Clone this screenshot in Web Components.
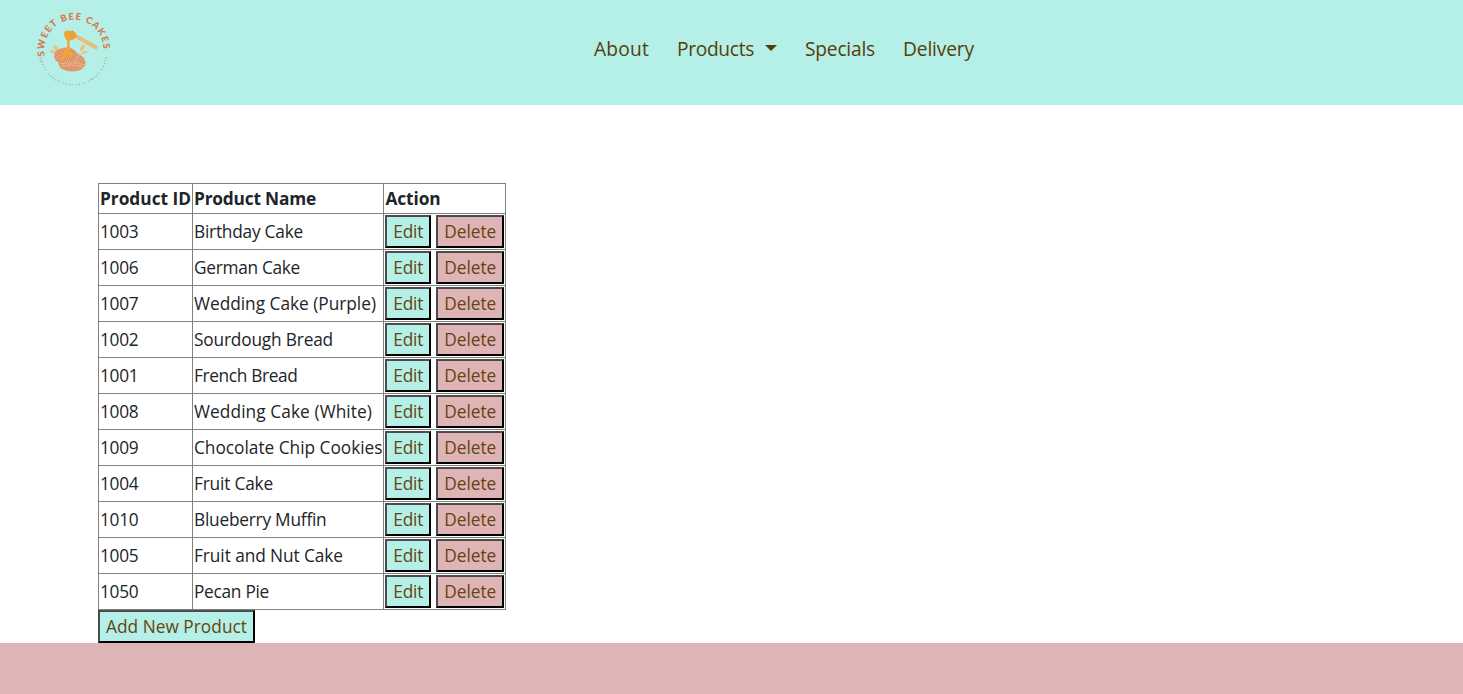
<!DOCTYPE html>
<html lang="en">
<head>
<meta charset="utf-8">
<title>Sweet Bee Cakes</title>
<style>
html, body { margin: 0; height: 100%; background: #fff; }
body { font: 17.3px/27px "Open Sans", "Noto Sans", sans-serif; color: #212529; overflow: hidden; }
</style>
</head>
<body>
<bakery-page></bakery-page>
<script>
// Inline text set to a given advance width through its letter spacing.
class FitText extends HTMLElement {
  connectedCallback() {
    const root = this.attachShadow({ mode: 'open' });
    root.innerHTML = '<style>:host{display:inline-block;white-space:nowrap}span{display:inline-block}</style><span><slot></slot></span>';
    const span = root.querySelector('span');
    const target = +this.getAttribute('w');
    const natural = span.getBoundingClientRect().width;
    span.style.letterSpacing = (target - natural) / this.textContent.length + 'px';
    this.style.width = target + 'px';
  }
}

class BeeLogo extends HTMLElement {
  connectedCallback() {
    this.attachShadow({ mode: 'open' }).innerHTML = `
<style>:host{display:block;width:92px;height:92px}svg{display:block}text{font-family:Lato,sans-serif}</style>
<svg width="92" height="92" viewBox="0 0 92 92">
  <defs>
    <path id="top" d="M17.2 53A29.6 30 0 1 1 74.6 53"/>
    <path id="low" d="M11.2 47.500A34.3 34.3 0 0 0 79.8 47.500"/>
    <pattern id="weave" width="2.2" height="2.2" patternUnits="userSpaceOnUse" patternTransform="rotate(25)">
      <rect width="2.2" height="2.2" fill="#d98359"/><path d="M0 .4H2.2M.4 0V2.2" stroke="#e6ad88" stroke-width=".6"/>
    </pattern>
  </defs>
  <text font-size="9.4" font-weight="900" fill="#d9774b"><textPath href="#top" startOffset="1" textLength="99">SWEET BEE CAKES</textPath></text>
  <text font-size="2.6" font-weight="700" fill="#a59a7e"><textPath href="#low" startOffset="6" textLength="96">SWEET CAKES THAT IS A SWEET CAKES</textPath></text>
  <g fill="#e9c57c">
    <path d="M30 47.500Q24.500 46 26 40.500Q31 42.500 30 47.500Z"/>
    <path d="M29 50Q24 50.500 21 46.500Q27 44.500 29 50Z"/>
    <path d="M52 47.500Q51 41.500 57 40.500Q57.500 46 52 47.500Z"/>
    <path d="M53 49.800Q55 45 60 47.500Q57.500 51 53 49.800Z"/>
  </g>
  <ellipse cx="44" cy="59.500" rx="13.500" ry="8" fill="url(#weave)"/>
  <path d="M26 53Q26 45 35 44Q44 42 49 49Q58 53 57 59Q51 62 40 60Q27 60 26 53Z" fill="url(#weave)"/>
  <path d="M47 58Q48 52 53 50M32 60Q44 57 57 61M33 62.500Q44 59 56 63.500" fill="none" stroke="#ebb880" stroke-width="1"/>
  <path d="M47 30L50 31L69.500 42Q70 45.500 67.500 45.500L48.500 35Z" fill="#e8be79"/>
  <path d="M36 30Q36.500 26 40 27L45 26.500Q48.500 29 49 32Q48 35 45 35.500Q43 37 42.300 35.500Q40.700 39 42 45L45 50Q46 54 43 53L40.500 50Q39.500 57 37 55L36 52Q34 58 31 56.500Q34 52 33.500 48.500Q38.500 48 39.200 42V36.500Q36 33 36 30Z" fill="#eda438"/>
  <path d="M41.500 27.500L45 34.500M44.500 27L47 33" stroke="#dc922f" stroke-width=".6"/>
</svg>`;
  }
}

class SiteNav extends HTMLElement {
  connectedCallback() {
    this.attachShadow({ mode: 'open' }).innerHTML = `
<style>
:host{display:flex;height:105px;background:#b4f0e7;box-sizing:border-box;padding:4px 0 0 28px;color:#583c0b}
nav{display:flex;margin:30px 0 0 474px;font-size:19.2px;line-height:30px;height:30px}
a{display:flex;color:inherit;text-decoration:none;margin-right:28px;white-space:nowrap}
i{width:0;height:0;margin:11px 0 0 11px;border:6px solid transparent;border-top-color:#583c0b;border-bottom:0}
</style>
<bee-logo></bee-logo>
<nav>
<a><fit-text w="55">About</fit-text></a>
<a><fit-text w="77">Products</fit-text><i></i></a>
<a><fit-text w="70">Specials</fit-text></a>
<a><fit-text w="71">Delivery</fit-text></a>
</nav>`;
  }
}

class CakeButton extends HTMLElement {
  connectedCallback() {
    this.attachShadow({ mode: 'open' }).innerHTML = `
<style>
:host{display:block}
button{display:block;margin:0;box-sizing:border-box;height:33px;padding:1px 5.7px 1px 6.3px;border:2px solid;border-color:#4c4c4c #000 #000 #4c4c4c;border-radius:0;background:var(--fill,#b4f0e7);color:#664310;font:inherit;line-height:27px;white-space:nowrap}
:host(.add) button{padding:1px 6px}
</style>
<button><slot></slot></button>`;
  }
}

class ProductRow extends HTMLElement {
  connectedCallback() {
    const [id, name, w] = ['pid', 'name', 'w'].map(k => this.getAttribute(k));
    this.attachShadow({ mode: 'open' }).innerHTML = `
<style>
:host{display:grid;grid-template-columns:94px 191px 123px;height:36px;box-sizing:border-box;border-bottom:1px solid #808080}
div{border-left:1px solid #808080;padding:4px 1px;box-sizing:border-box}
.act{display:flex;gap:5px;padding:1px;border-right:1px solid #808080}
.del{--fill:#deb4b6}
</style>
<div><fit-text w="38.5">${id}</fit-text></div>
<div><fit-text w="${w}">${name}</fit-text></div>
<div class="act"><cake-button><fit-text w="30">Edit</fit-text></cake-button><cake-button class="del"><fit-text w="52">Delete</fit-text></cake-button></div>`;
  }
}

class ProductHead extends HTMLElement {
  connectedCallback() {
    this.attachShadow({ mode: 'open' }).innerHTML = `
<style>
:host{display:grid;grid-template-columns:94px 191px 123px;height:31px;box-sizing:border-box;border:solid #808080;border-width:1px 0;font-weight:700}
div{border-left:1px solid #808080;padding:1px;box-sizing:border-box}
div:last-child{border-right:1px solid #808080;padding-left:1.5px}
</style>
<div><fit-text w="91">Product ID</fit-text></div>
<div><fit-text w="122">Product Name</fit-text></div>
<div><fit-text w="55">Action</fit-text></div>`;
  }
}

class BakeryPage extends HTMLElement {
  connectedCallback() {
    const rows = [
      [1003, 'Birthday Cake', 109], [1006, 'German Cake', 106], [1007, 'Wedding Cake (Purple)', 182],
      [1002, 'Sourdough Bread', 139], [1001, 'French Bread', 103.5], [1008, 'Wedding Cake (White)', 178],
      [1009, 'Chocolate Chip Cookies', 188.5], [1004, 'Fruit Cake', 79], [1010, 'Blueberry Muffin', 132.5],
      [1005, 'Fruit and Nut Cake', 149], [1050, 'Pecan Pie', 75]
    ].map(([id, name, w]) => `<product-row pid="${id}" name="${name}" w="${w}"></product-row>`).join('');
    this.attachShadow({ mode: 'open' }).innerHTML = `
<style>
:host{display:flex;flex-direction:column;height:694px}
main{width:408px;margin:78px 0 0 98px}
.add{width:157px}
footer{flex:1;background:#deb4b6}
</style>
<site-nav></site-nav>
<main><product-head></product-head>${rows}<cake-button class="add"><fit-text w="141">Add New Product</fit-text></cake-button></main>
<footer></footer>`;
  }
}

customElements.define('fit-text', FitText);
customElements.define('bee-logo', BeeLogo);
customElements.define('site-nav', SiteNav);
customElements.define('cake-button', CakeButton);
customElements.define('product-row', ProductRow);
customElements.define('product-head', ProductHead);
customElements.define('bakery-page', BakeryPage);
</script>
</body>
</html>
